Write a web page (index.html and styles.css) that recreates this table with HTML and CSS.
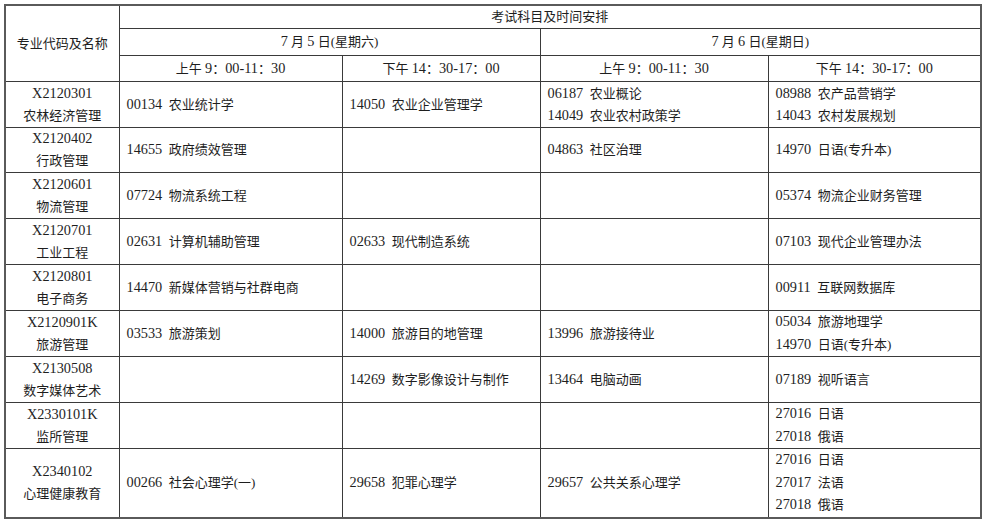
FILE: index.html
```html
<!DOCTYPE html>
<html lang="zh">
<head>
<meta charset="utf-8">
<title>考试科目及时间安排</title>
<link rel="stylesheet" href="styles.css">
</head>
<body>
<div class="wrap">
<table class="sched">
  <colgroup>
    <col class="c-major">
    <col class="c-a">
    <col class="c-b">
    <col class="c-c">
    <col class="c-d">
  </colgroup>
  <tr class="h1">
    <td class="center" rowspan="3">专业代码及名称</td>
    <td class="center" colspan="4">考试科目及时间安排</td>
  </tr>
  <tr class="h2">
    <td class="center" colspan="2"><span class="n">7</span> 月 <span class="n">5</span> 日(星期六)</td>
    <td class="center" colspan="2"><span class="n">7</span> 月 <span class="n">6</span> 日(星期日)</td>
  </tr>
  <tr class="h3">
    <td class="center">上午 <span class="n">9</span>：<span class="n">00-11</span>：<span class="n">30</span></td>
    <td class="center">下午 <span class="n">14</span>：<span class="n">30-17</span>：<span class="n">00</span></td>
    <td class="center">上午 <span class="n">9</span>：<span class="n">00-11</span>：<span class="n">30</span></td>
    <td class="center">下午 <span class="n">14</span>：<span class="n">30-17</span>：<span class="n">00</span></td>
  </tr>
  <tr class="r46">
    <td class="center"><span class="n">X2120301</span><br>农林经济管理</td>
    <td><span class="n">00134</span>&nbsp; 农业统计学</td>
    <td><span class="n">14050</span>&nbsp; 农业企业管理学</td>
    <td><span class="n">06187</span>&nbsp; 农业概论<br><span class="n">14049</span>&nbsp; 农业农村政策学</td>
    <td><span class="n">08988</span>&nbsp; 农产品营销学<br><span class="n">14043</span>&nbsp; 农村发展规划</td>
  </tr>
  <tr class="r45">
    <td class="center"><span class="n">X2120402</span><br>行政管理</td>
    <td><span class="n">14655</span>&nbsp; 政府绩效管理</td>
    <td></td>
    <td><span class="n">04863</span>&nbsp; 社区治理</td>
    <td><span class="n">14970</span>&nbsp; 日语(专升本)</td>
  </tr>
  <tr class="r46">
    <td class="center"><span class="n">X2120601</span><br>物流管理</td>
    <td><span class="n">07724</span>&nbsp; 物流系统工程</td>
    <td></td>
    <td></td>
    <td><span class="n">05374</span>&nbsp; 物流企业财务管理</td>
  </tr>
  <tr class="r46">
    <td class="center"><span class="n">X2120701</span><br>工业工程</td>
    <td><span class="n">02631</span>&nbsp; 计算机辅助管理</td>
    <td><span class="n">02633</span>&nbsp; 现代制造系统</td>
    <td></td>
    <td><span class="n">07103</span>&nbsp; 现代企业管理办法</td>
  </tr>
  <tr class="r46">
    <td class="center"><span class="n">X2120801</span><br>电子商务</td>
    <td><span class="n">14470</span>&nbsp; 新媒体营销与社群电商</td>
    <td></td>
    <td></td>
    <td><span class="n">00911</span>&nbsp; 互联网数据库</td>
  </tr>
  <tr class="r46">
    <td class="center"><span class="n">X2120901K</span><br>旅游管理</td>
    <td><span class="n">03533</span>&nbsp; 旅游策划</td>
    <td><span class="n">14000</span>&nbsp; 旅游目的地管理</td>
    <td><span class="n">13996</span>&nbsp; 旅游接待业</td>
    <td class="tall"><span class="n">05034</span>&nbsp; 旅游地理学<br><span class="n">14970</span>&nbsp; 日语(专升本)</td>
  </tr>
  <tr class="r46">
    <td class="center"><span class="n">X2130508</span><br>数字媒体艺术</td>
    <td></td>
    <td><span class="n">14269</span>&nbsp; 数字影像设计与制作</td>
    <td><span class="n">13464</span>&nbsp; 电脑动画</td>
    <td><span class="n">07189</span>&nbsp; 视听语言</td>
  </tr>
  <tr class="r45">
    <td class="center"><span class="n">X2330101K</span><br>监所管理</td>
    <td></td>
    <td></td>
    <td></td>
    <td class="tall"><span class="n">27016</span>&nbsp; 日语<br><span class="n">27018</span>&nbsp; 俄语</td>
  </tr>
  <tr class="r69">
    <td class="center"><span class="n">X2340102</span><br>心理健康教育</td>
    <td><span class="n">00266</span>&nbsp; 社会心理学(一)</td>
    <td><span class="n">29658</span>&nbsp; 犯罪心理学</td>
    <td><span class="n">29657</span>&nbsp; 公共关系心理学</td>
    <td class="tall"><span class="n">27016</span>&nbsp; 日语<br><span class="n">27017</span>&nbsp; 法语<br><span class="n">27018</span>&nbsp; 俄语</td>
  </tr>
</table>
</div>
</body>
</html>
```

FILE: styles.css
```css
html, body {
  margin: 0;
  padding: 0;
  background: #ffffff;
}

.wrap {
  padding: 4px 0 0 4px;
}

.sched {
  width: 976px;
  table-layout: fixed;
  border-collapse: collapse;
  border: 2px solid #5a5a5a;
  font-family: "Liberation Serif", "Noto Sans CJK SC", serif;
  font-size: 13px;
  color: #1e1e1e;
}

.c-major { width: 114px; }
.c-a { width: 223px; }
.c-b { width: 198px; }
.c-c { width: 228px; }
.c-d { width: 213px; }

.sched td {
  border: 1px solid #3a3a3a;
  padding: 0 7px;
  line-height: 22px;
  vertical-align: middle;
  text-align: left;
  white-space: nowrap;
  overflow: hidden;
}

.sched td.center {
  text-align: center;
  padding: 0;
}

.sched td.tall {
  line-height: 22.5px;
}

.n {
  font-size: 14.3px;
  line-height: 1;
}

.h1 { height: 23px; }
.h2 { height: 27px; }
.h3 { height: 26px; }
.r45 { height: 45px; }
.r46 { height: 46px; }
.r69 { height: 69px; }
```
